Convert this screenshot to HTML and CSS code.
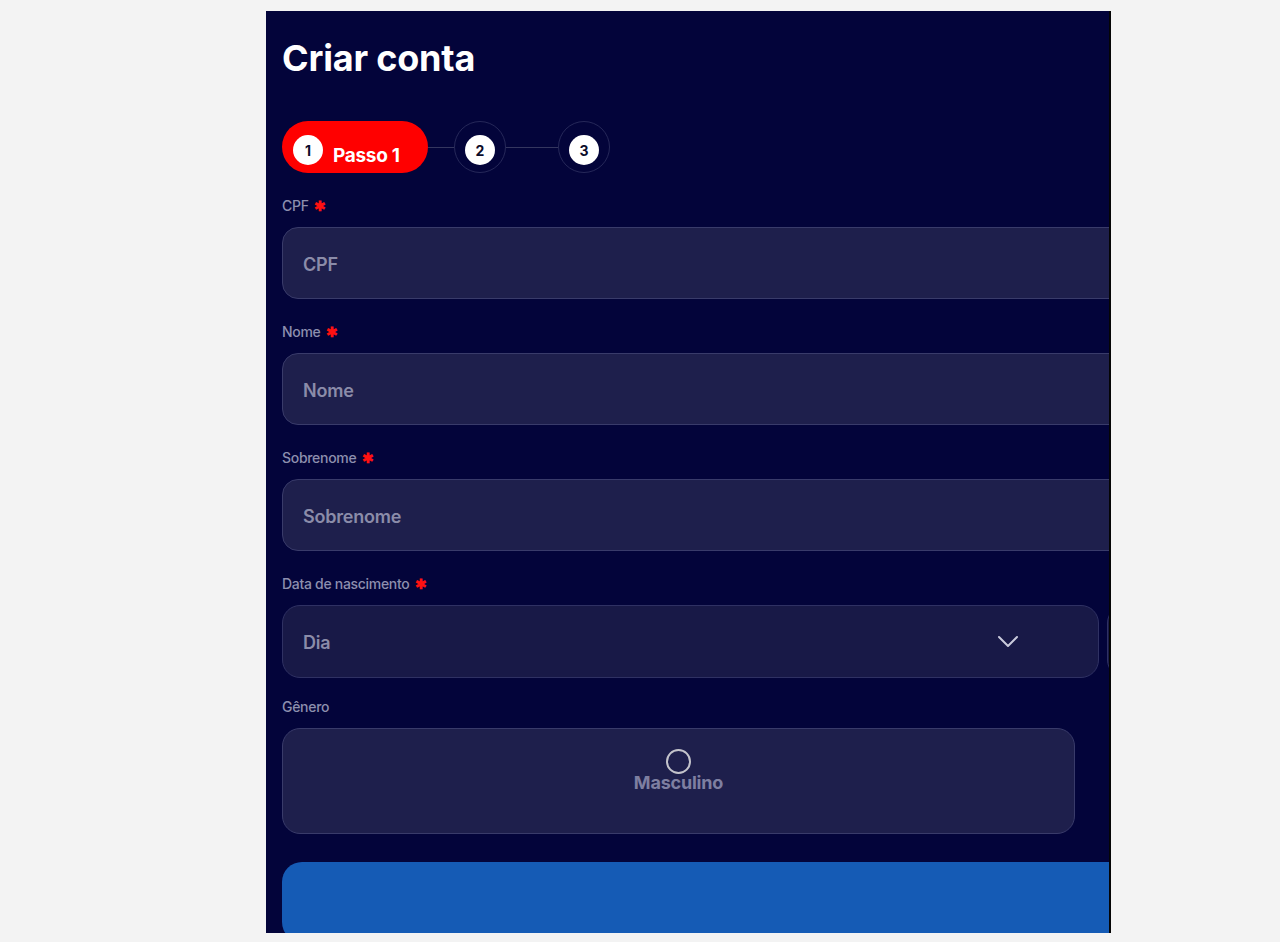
FILE: index.html
```html
<!DOCTYPE html>
<html lang="pt-BR">
<head>
<meta charset="utf-8">
<title>Criar conta</title>
<link rel="stylesheet" href="styles.css">
</head>
<body>
<div class="panel">
  <h1 class="title">Criar conta</h1>

  <div class="stepper">
    <div class="step-active">
      <span class="dot">1</span>
      <span class="step-text">Passo 1</span>
    </div>
    <span class="line line-short"></span>
    <div class="ring"><span class="dot">2</span></div>
    <span class="line line-long"></span>
    <div class="ring"><span class="dot">3</span></div>
  </div>

  <div class="field">
    <div class="label">CPF <span class="req">✱</span></div>
    <div class="input"><span class="ph">CPF</span></div>
  </div>

  <div class="field">
    <div class="label">Nome <span class="req">✱</span></div>
    <div class="input"><span class="ph">Nome</span></div>
  </div>

  <div class="field">
    <div class="label">Sobrenome <span class="req">✱</span></div>
    <div class="input"><span class="ph">Sobrenome</span></div>
  </div>

  <div class="field">
    <div class="label">Data de nascimento <span class="req">✱</span></div>
    <div class="date-row">
      <div class="select">
        <span class="ph">Dia</span>
        <svg class="chev" width="22" height="13" viewBox="0 0 22 13"><polyline points="2,2 11,11 20,2" fill="none" stroke="#c9cadc" stroke-width="2" stroke-linecap="round" stroke-linejoin="round"/></svg>
      </div>
      <div class="select select-next"></div>
    </div>
  </div>

  <div class="field field-gender">
    <div class="label">Gênero</div>
    <div class="gender-box">
      <label class="radio">
        <span class="radio-circle"></span>
        <span class="radio-text">Masculino</span>
      </label>
    </div>
  </div>

  <div class="submit"></div>
</div>
</body>
</html>
```

FILE: styles.css
```css
* { box-sizing: border-box; }

html, body {
  margin: 0;
  padding: 0;
}

body {
  background: #f3f3f3;
  font-family: "Inter", "Liberation Sans", sans-serif;
  height: 942px;
  overflow: hidden;
}

.panel {
  margin-left: 266px;
  margin-top: 11px;
  width: 845px;
  height: 922px;
  background: #03043a;
  border-right: 2px solid #050505;
  overflow: hidden;
  padding: 26px 0 0 16px;
}

.title {
  margin: 0;
  color: #ffffff;
  font-size: 36px;
  line-height: 42px;
  font-weight: 700;
  letter-spacing: -0.2px;
}

.stepper {
  margin-top: 42px;
  display: flex;
  align-items: center;
  height: 52px;
  margin-bottom: 25px;
}

.step-active {
  width: 146px;
  height: 52px;
  border-radius: 26px;
  background: #ff0000;
  display: flex;
  align-items: center;
  padding-left: 11px;
}

.dot {
  width: 30px;
  height: 30px;
  border-radius: 50%;
  background: #ffffff;
  color: #0b0b2a;
  font-size: 14px;
  font-weight: 700;
  display: flex;
  align-items: center;
  justify-content: center;
  margin-top: 6px;
  flex: none;
}

.step-text {
  color: #ffffff;
  font-size: 19px;
  font-weight: 700;
  margin-left: 10px;
  padding-top: 17px;
  letter-spacing: -0.3px;
}

.line {
  height: 1px;
  background: #34365f;
  flex: none;
}
.line-short { width: 26px; }
.line-long { width: 52px; }

.ring {
  width: 52px;
  height: 52px;
  border-radius: 50%;
  border: 1px solid #262859;
  display: flex;
  align-items: center;
  justify-content: center;
  flex: none;
}

.field {
  display: flex;
  flex-direction: column;
  margin-bottom: 25px;
}

.label {
  font-size: 14px;
  line-height: 16px;
  font-weight: 500;
  color: #8d8fae;
  margin-bottom: 13px;
  letter-spacing: -0.3px;
}

.req {
  color: #ff1111;
  font-size: 14px;
  font-weight: 700;
  margin-left: 2px;
}

.input {
  width: 900px;
  height: 72px;
  border-radius: 16px;
  background: #1e1f4c;
  border: 1px solid #393b6a;
  display: flex;
  align-items: center;
  padding-left: 20px;
}

.ph {
  color: #8b8ca9;
  font-size: 18px;
  font-weight: 600;
  padding-top: 2px;
  letter-spacing: -0.2px;
}

.date-row {
  display: flex;
  gap: 8px;
  width: 900px;
}

.select {
  width: 817px;
  height: 73px;
  border-radius: 18px;
  background: #181947;
  border: 1px solid #2f3163;
  display: flex;
  align-items: center;
  padding-left: 20px;
  flex: none;
}

.select-next {
  width: 200px;
}

.chev {
  margin-left: auto;
  margin-right: 79px;
}

.field-gender {
  margin-top: -4px;
  margin-bottom: 28px;
}

.gender-box {
  width: 793px;
  height: 106px;
  border-radius: 18px;
  background: #1e1f4c;
  border: 1px solid #393b6a;
  display: flex;
  justify-content: center;
  align-items: flex-start;
  padding-top: 20px;
}

.radio {
  display: flex;
  flex-direction: column;
  align-items: center;
}

.radio-circle {
  width: 25px;
  height: 25px;
  border-radius: 50%;
  border: 2px solid #c3c3cb;
}

.radio-text {
  color: #7e7fa1;
  font-size: 18px;
  font-weight: 700;
  line-height: 18px;
  margin-top: 0;
  letter-spacing: -0.2px;
}

.submit {
  width: 900px;
  height: 80px;
  border-radius: 20px;
  background: #155bb5;
}
```
